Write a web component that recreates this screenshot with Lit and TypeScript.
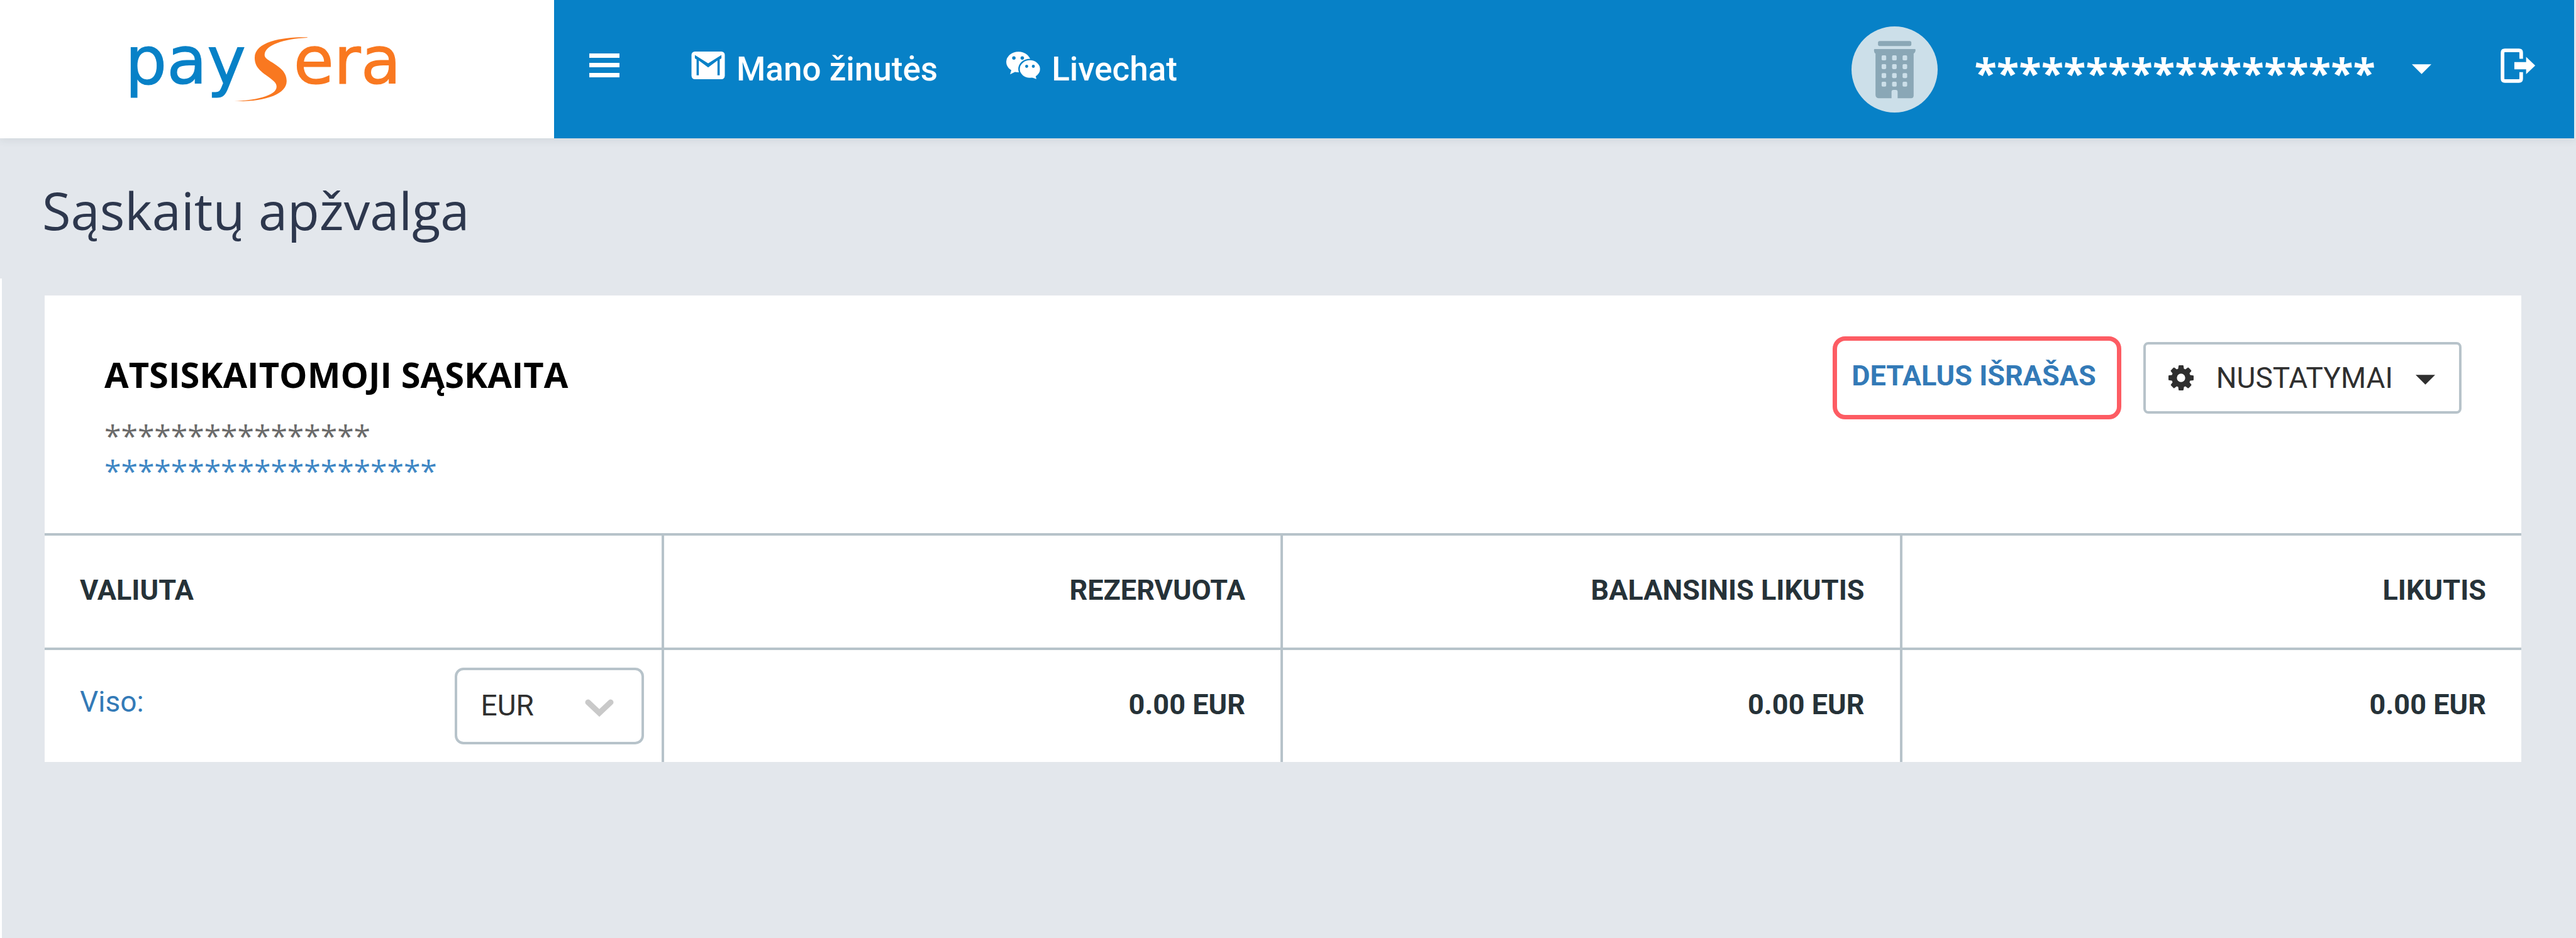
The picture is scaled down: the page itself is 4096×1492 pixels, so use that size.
import { LitElement, html, css, svg } from "lit";
import { customElement, property, state } from "lit/decorators.js";

const cogPath =
  "M1024 896q0-106-75-181t-181-75-181 75-75 181 75 181 181 75 181-75 75-181zm512-109v222q0 12-8 23t-20 13l-185 28q-19 54-39 91 35 50 107 138 10 12 10 25t-9 23q-27 37-99 108t-94 71q-12 0-26-9l-138-108q-44 23-91 38-16 136-29 186-7 28-36 28h-222q-14 0-24.500-8.500t-11.500-21.500l-28-184q-49-16-90-37l-141 107q-10 9-25 9-14 0-25-11-126-114-165-168-7-10-7-23 0-12 8-23 15-21 51-66.500t54-70.500q-27-50-41-99l-183-27q-13-2-21-12.500t-8-23.500v-222q0-12 8-23t19-13l186-28q14-46 39-92-40-57-107-138-10-12-10-24 0-10 9-23 26-36 98.500-107.500t94.500-71.500q13 0 26 10l138 107q44-23 91-38 16-136 29-186 7-28 36-28h222q14 0 24.500 8.500t11.500 21.500l28 184q49 16 90 37l142-107q9-9 24-9 13 0 25 10 129 119 165 170 7 8 7 22 0 12-8 23-15 21-51 66.500t-54 70.500q26 50 41 98l183 28q13 2 21 12.500t8 23.500z";

const caret = html`<svg class="caret" viewBox="0 0 32 16" aria-hidden="true"><path d="M0 0H32L16 16Z" fill="currentColor" /></svg>`;

@customElement("top-bar")
class TopBar extends LitElement {
  static styles = css`
    :host {
      display: flex;
      height: 220px;
      font-family: Roboto, "Liberation Sans", sans-serif;
      box-shadow: 0 3px 12px rgba(60, 80, 90, 0.1);
    }
    .brand {
      display: flex;
      align-items: center;
      flex: 0 0 881px;
      box-sizing: border-box;
      padding-left: 206px;
      background: #fff;
    }
    .logo { width: 440px; height: 108px; overflow: visible; }
    .wordmark {
      font-family: "DejaVu Sans", sans-serif;
      font-size: 345px;
      stroke-width: 4;
    }
    .blue { fill: #0781c7; stroke: #0781c7; }
    .orange { fill: #f97820; stroke: #f97820; }
    .bar {
      display: flex;
      align-items: center;
      flex: 1;
      margin-right: 3px;
      padding: 0 61px 0 56px;
      background: #0781c7;
      color: #fff;
    }
    button, a {
      display: flex;
      align-items: center;
      padding: 0;
      border: 0;
      background: none;
      color: inherit;
      font: inherit;
      text-decoration: none;
      cursor: pointer;
    }
    .links { display: flex; gap: 109px; margin-left: 114px; }
    .links a { gap: 18px; font-size: 53px; line-height: 64px; font-weight: 500; }
    .raised { margin-bottom: 12px; }
    .menu { width: 48px; height: 38px; }
    .mail, .chat { width: 54px; height: 44px; }
    .user { gap: 58px; margin-left: auto; }
    .avatar { width: 137px; height: 137px; }
    .name {
      padding-top: 10px;
      font-family: "Open Sans", "Noto Sans", sans-serif;
      font-size: 65px;
      line-height: 80px;
      font-weight: 700;
    }
    .caret { width: 31px; height: 16px; }
    .logout { margin-left: 110px; }
    .exit { width: 56px; height: 55px; }
  `;

  render() {
    const windows = [197, 243, 290, 335].flatMap((y) =>
      [192, 247, 302].map((x) => svg`<rect x=${x} y=${y} width="24" height="26" rx="6" />`)
    );
    return html`
      <a class="brand" href="#" aria-label="Paysera">
        <svg class="logo" viewBox="50 70 1455 355">
          <text class="wordmark blue" x="27" y="325">pay</text>
          <path
            fill="#f97820"
            d="M985 80C860 78 708 100 708 188C708 240 745 262 780 288C812 312 823 322 823 340C823 390 700 412 600 416C760 420 876 380 876 310C876 262 840 238 800 212C775 196 760 188 760 172C762 120 860 88 985 82Z"
          />
          <text class="wordmark orange" x="912" y="325">era</text>
        </svg>
      </a>
      <div class="bar">
        <button aria-label="Meniu">
          <svg class="menu raised" viewBox="0 0 48 38" fill="#fff">
            <rect y="0" width="48" height="7" />
            <rect y="15" width="48" height="7" />
            <rect y="31" width="48" height="7" />
          </svg>
        </button>
        <nav class="links">
          <a href="#">
            <svg class="mail raised" viewBox="0 0 59 49" aria-hidden="true">
              <rect width="59" height="49" rx="6" fill="#fff" />
              <path fill="#0781c7" d="M6 6L29.500 21L53 6V12L50 14V42H46V16L29.500 28L13 16V42H9V14L6 12Z" />
            </svg>
            Mano žinutės
          </a>
          <a href="#">
            <svg class="chat raised" viewBox="60 62 178 144" aria-hidden="true">
              <ellipse cx="124" cy="116" rx="64" ry="54" fill="#fff" />
              <path d="M88 155L80 181L112 165Z" fill="#fff" />
              <ellipse cx="184" cy="153" rx="61" ry="54" fill="#0781c7" />
              <ellipse cx="184" cy="153" rx="53" ry="46" fill="#fff" />
              <path d="M190 196L218 206L212 182Z" fill="#fff" />
              <g fill="#0781c7">
                <circle cx="100" cy="95" r="9" />
                <circle cx="144" cy="95" r="9" />
                <circle cx="167" cy="139" r="8" />
                <circle cx="202" cy="139" r="8" />
              </g>
            </svg>
            Livechat
          </a>
        </nav>
        <button class="user">
          <svg class="avatar" viewBox="34 45 452 452" aria-hidden="true">
            <circle cx="260" cy="271" r="226" fill="#ccdfe9" />
            <g fill="#8aa7b6">
              <rect x="173" y="122" width="175" height="26" rx="9" />
              <path d="M152 168q0-4 4-4h210q4 0 4 4c0 10-4 16-10 20V408q0 14-14 14H276V388q0-10-10-10H254q-10 0-10 10V422H176q-16-2-16-18V188q-8-4-8-20Z" />
            </g>
            <g fill="#ccdfe9">${windows}</g>
          </svg>
          <span class="name">******************</span>
          ${caret}
        </button>
        <a class="logout" href="#" aria-label="Atsijungti">
          <svg class="exit raised" viewBox="828 75 184 182">
            <path
              fill="none"
              stroke="#fff"
              stroke-width="19"
              d="M936 130V97q0-12-12-12H850q-12 0-12 12V235q0 12 12 12H924q12 0 12-12V200"
            />
            <path fill="#fff" d="M900 147H962V120L1010 165L962 211V185H900Z" />
          </svg>
        </a>
      </div>
    `;
  }
}

@customElement("account-card")
class AccountCard extends LitElement {
  @property() heading = "";
  @property() owner = "";
  @property() number = "";
  @state() private amounts = [
    { title: "REZERVUOTA", value: "0.00 EUR" },
    { title: "BALANSINIS LIKUTIS", value: "0.00 EUR" },
    { title: "LIKUTIS", value: "0.00 EUR" },
  ];

  static styles = css`
    :host {
      display: block;
      background: #fff;
      color: #263238;
      font-family: Roboto, "Liberation Sans", sans-serif;
      font-size: 46px;
      line-height: 56px;
    }
    .head {
      display: flex;
      align-items: flex-start;
      justify-content: space-between;
      padding: 65px 95px 71px;
    }
    .account {
      padding-top: 24px;
      font-family: "Open Sans", "Noto Sans", sans-serif;
      font-size: 48px;
    }
    h2 {
      margin: 0 0 34px;
      color: #000;
      font-size: 56px;
      line-height: 72px;
      font-weight: 700;
    }
    p { margin: 0; color: #6a6a6a; }
    a { color: #337ab7; text-decoration: none; }
    .number { display: block; color: #3f87c4; }
    .actions { display: flex; align-items: center; gap: 35px; }
    .detail {
      padding: 28px 33px 34px 23px;
      border: 7px solid #fd5c63;
      border-radius: 20px;
      font-size: 45px;
      font-weight: 700;
    }
    .settings {
      display: flex;
      align-items: center;
      gap: 36px;
      padding: 25px 38px 25px 36px;
      border: 4px solid #b7c3ca;
      border-radius: 8px;
      background: #fff;
      color: #2f2f2f;
      font: inherit;
      cursor: pointer;
    }
    .cog { width: 40px; height: 40px; }
    .caret { width: 31px; height: 16px; margin-top: 6px; }
    table {
      width: 100%;
      table-layout: fixed;
      border-spacing: 0;
    }
    th, td {
      box-sizing: border-box;
      height: 182px;
      padding: 0 56px 4px;
      border-top: 4px solid #b7c3ca;
      border-right: 4px solid #b7c3ca;
      font-size: 45px;
      font-weight: 700;
      text-align: right;
      vertical-align: middle;
    }
    th:first-child { text-align: left; }
    th:last-child, td:last-child { border-right: 0; }
    .total {
      padding: 0 28px 0 56px;
      font-size: 46px;
      font-weight: 400;
    }
    .row { display: flex; align-items: center; justify-content: space-between; }
    label { padding-bottom: 14px; color: #337ab7; }
    .picker { display: grid; align-items: center; width: 301px; }
    .picker > * { grid-area: 1 / 1; }
    select {
      appearance: none;
      box-sizing: border-box;
      width: 100%;
      height: 122px;
      padding: 0 38px 2px;
      border: 4px solid #b7c3ca;
      border-radius: 14px;
      background: #fff;
      color: #2f2f2f;
      font: inherit;
    }
    .chevron {
      justify-self: end;
      width: 46px;
      height: 28px;
      margin: 6px 48px 0 0;
      pointer-events: none;
    }
  `;

  render() {
    return html`
      <div class="head">
        <div class="account">
          <h2>${this.heading}</h2>
          <p>${this.owner}</p>
          <a class="number" href="#">${this.number}</a>
        </div>
        <div class="actions">
          <a class="detail" href="#">DETALUS IŠRAŠAS</a>
          <button class="settings">
            <svg class="cog" viewBox="0 128 1536 1536" aria-hidden="true"><path fill="currentColor" d=${cogPath} /></svg>
            NUSTATYMAI
            ${caret}
          </button>
        </div>
      </div>
      <table>
        <thead>
          <tr>
            <th scope="col">VALIUTA</th>
            ${this.amounts.map((a) => html`<th scope="col">${a.title}</th>`)}
          </tr>
        </thead>
        <tbody>
          <tr>
            <td class="total">
              <div class="row">
                <label for="currency">Viso:</label>
                <div class="picker">
                  <select id="currency"><option>EUR</option></select>
                  <svg class="chevron" viewBox="0 0 46 28" aria-hidden="true">
                    <path d="M5 5L23 22L41 5" fill="none" stroke="#c9c9c9" stroke-width="9" stroke-linecap="round" />
                  </svg>
                </div>
              </div>
            </td>
            ${this.amounts.map((a) => html`<td>${a.value}</td>`)}
          </tr>
        </tbody>
      </table>
    `;
  }
}

@customElement("app-root")
class AppRoot extends LitElement {
  static styles = css`
    :host {
      display: flex;
      flex-direction: column;
      min-height: 100vh;
      background: #e3e7ec;
    }
    h1 {
      margin: 0;
      padding: 58px 67px 53px;
      color: #2d374d;
      font-family: "Open Sans", "Noto Sans", sans-serif;
      font-size: 83px;
      line-height: 112px;
      font-weight: 400;
    }
    main {
      flex: 1;
      padding: 27px 87px 27px 68px;
      border-left: 3px solid #fff;
    }
  `;

  render() {
    return html`
      <top-bar></top-bar>
      <h1>Sąskaitų apžvalga</h1>
      <main>
        <account-card
          heading="ATSISKAITOMOJI SĄSKAITA"
          owner="****************"
          number="********************"
        ></account-card>
      </main>
    `;
  }
}
